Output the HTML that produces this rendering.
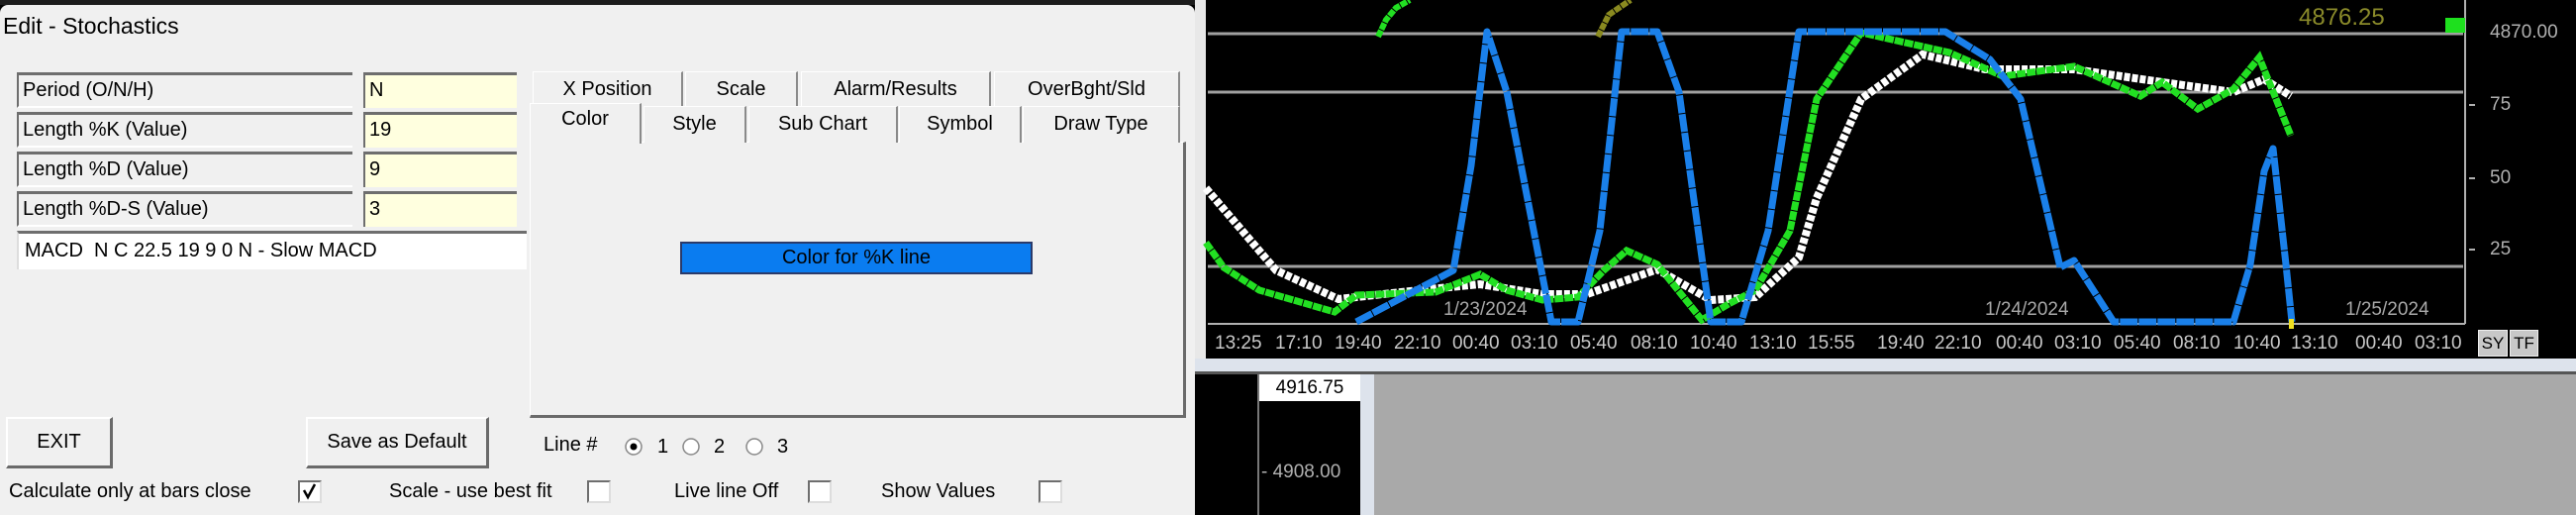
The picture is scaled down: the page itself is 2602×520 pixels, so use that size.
<!DOCTYPE html>
<html><head><meta charset="utf-8"><style>
*{margin:0;padding:0;box-sizing:border-box}
body{width:2602px;height:520px;overflow:hidden;background:#000;font-family:"Liberation Sans",sans-serif;position:relative}
.a{position:absolute;white-space:nowrap}
#dlg{position:absolute;left:0;top:5px;width:1207px;height:515px;background:#f0f0f0;border-radius:8px 8px 0 0}
.lbl{position:absolute;left:17px;width:339px;height:36px;background:#f0f0f0;border-top:3px solid #6e6e6e;border-left:2px solid #6e6e6e;border-bottom:2px solid #fff;font-size:20px;line-height:30px;padding-left:4px;color:#000}
.val{position:absolute;left:367px;width:155px;height:36px;background:#ffffdf;border-top:3px solid #6e6e6e;border-left:2px solid #6e6e6e;font-size:20px;line-height:30px;padding-left:4px}
.tab{position:absolute;height:35px;border:1px solid #fff;border-right:2px solid #8a8a8a;border-bottom:none;font-size:20px;text-align:center;line-height:34px;background:#f0f0f0}
.btn{position:absolute;background:#f0f0f0;border:2px solid #fff;border-right:3px solid #6a6a6a;border-bottom:3px solid #6a6a6a;font-size:20px;text-align:center}
.cb{position:absolute;width:24px;height:23px;background:#fff;border:2px solid #6e6e6e;border-right-color:#ddd;border-bottom-color:#ddd}
.bt{font-size:20px;color:#000}
.tl{position:absolute;top:336px;font-size:19px;color:#c8c8c8}
</style></head><body>
<div class="a" style="left:0;top:0;width:1207px;height:5px;background:#1c1c1c"></div>
<div id="dlg"></div>
<div class="a" style="left:3px;top:13px;font-size:23px;color:#000">Edit - Stochastics</div>

<div class="lbl" style="top:73px">Period (O/N/H)</div>
<div class="lbl" style="top:113px">Length %K (Value)</div>
<div class="lbl" style="top:153px">Length %D (Value)</div>
<div class="lbl" style="top:193px">Length %D-S (Value)</div>
<div class="val" style="top:73px">N</div>
<div class="val" style="top:113px">19</div>
<div class="val" style="top:153px">9</div>
<div class="val" style="top:193px">3</div>
<div class="a" style="left:17px;top:233px;width:515px;height:39px;background:#fff;border-top:3px solid #6e6e6e;border-left:2px solid #ddd;font-size:20px;line-height:34px;padding-left:6px">MACD&nbsp; N C 22.5 19 9 0 N - Slow MACD</div>

<div class="tab" style="left:538px;top:72px;width:152px">X Position</div>
<div class="tab" style="left:692px;top:72px;width:114px">Scale</div>
<div class="tab" style="left:809px;top:72px;width:192px">Alarm/Results</div>
<div class="tab" style="left:1004px;top:72px;width:188px">OverBght/Sld</div>
<div class="a" style="left:535px;top:143px;width:663px;height:279px;background:#f0f0f0;border-top:1px solid #fff;border-left:1px solid #fff;border-right:3px solid #6a6a6a;border-bottom:3px solid #6a6a6a"></div>
<div class="tab" style="left:650px;top:107px;width:104px;height:37px">Style</div>
<div class="tab" style="left:756px;top:107px;width:151px;height:37px">Sub Chart</div>
<div class="tab" style="left:908px;top:107px;width:124px;height:37px">Symbol</div>
<div class="tab" style="left:1033px;top:107px;width:159px;height:37px">Draw Type</div>
<div class="tab" style="left:535px;top:104px;width:113px;height:41px;line-height:30px">Color</div>
<div class="a" style="left:687px;top:244px;width:356px;height:33px;background:#0a7cf0;border:2px solid #2a3a6a;font-size:20px;text-align:center;line-height:29px;color:#000">Color for %K line</div>

<div class="btn" style="left:6px;top:421px;width:108px;height:52px;line-height:47px">EXIT</div>
<div class="btn" style="left:309px;top:421px;width:185px;height:52px;line-height:47px">Save as Default</div>
<div class="a bt" style="left:549px;top:438px">Line #</div>
<svg class="a" style="left:630px;top:438px" width="180" height="26">
<circle cx="10" cy="13" r="8" fill="#fff" stroke="#888" stroke-width="1.5"/><circle cx="10" cy="13" r="3.5" fill="#000"/>
<circle cx="68" cy="13" r="8" fill="#fff" stroke="#888" stroke-width="1.5"/>
<circle cx="132" cy="13" r="8" fill="#fff" stroke="#888" stroke-width="1.5"/>
</svg>
<div class="a bt" style="left:664px;top:440px">1</div>
<div class="a bt" style="left:721px;top:440px">2</div>
<div class="a bt" style="left:785px;top:440px">3</div>

<div class="a bt" style="left:9px;top:485px">Calculate only at bars close</div>
<div class="cb" style="left:301px;top:485px"><svg width="20" height="19"><path d="M4 8 L8 15 L15 2" stroke="#000" stroke-width="2.5" fill="none"/></svg></div>
<div class="a bt" style="left:393px;top:485px">Scale - use best fit</div>
<div class="cb" style="left:593px;top:485px"></div>
<div class="a bt" style="left:681px;top:485px">Live line Off</div>
<div class="cb" style="left:816px;top:485px"></div>
<div class="a bt" style="left:890px;top:485px">Show Values</div>
<div class="cb" style="left:1049px;top:485px"></div>

<!-- chart -->
<div class="a" style="left:1207px;top:0;width:11px;height:362px;background:#e8e8e8"></div>
<svg class="a" style="left:0;top:0" width="2602" height="520">
<g stroke="#a0a0a0" stroke-width="3"><line x1="1220" y1="34" x2="2488" y2="34"/><line x1="1220" y1="93" x2="2488" y2="93"/><line x1="1220" y1="269" x2="2488" y2="269"/></g>
<line x1="1220" y1="327" x2="2490" y2="327" stroke="#b0b0b0" stroke-width="2"/>
<line x1="2490" y1="0" x2="2490" y2="327" stroke="#b0b0b0" stroke-width="2"/>
<g stroke="#b0b0b0" stroke-width="2"><line x1="2494" y1="106" x2="2500" y2="106"/><line x1="2494" y1="180" x2="2500" y2="180"/><line x1="2494" y1="252" x2="2500" y2="252"/></g>
<rect x="2470" y="18" width="20" height="15" fill="#1ee01e"/>
<polyline points="1392,37 1400,20 1410,8 1424,0" fill="none" stroke="#22e022" stroke-width="6" stroke-dasharray="7 1"/>
<polyline points="1614,37 1625,15 1647,0" fill="none" stroke="#8a8a20" stroke-width="6" stroke-dasharray="7 1"/>
<polyline points="1218,190 1289,273 1352,302 1433,293 1495,287 1558,297 1603,297 1674,272 1728,303 1773,300 1817,260 1835,200 1880,100 1942,55 2005,70 2095,70 2184,83 2256,93 2287,80 2314,97" fill="none" stroke="#fff" stroke-width="8" stroke-dasharray="6 2"/>
<polyline points="1218,245 1236,270 1272,293 1348,315 1370,298 1450,295 1495,277 1522,293 1558,303 1594,300 1620,273 1643,253 1674,267 1719,323 1746,307 1773,293 1808,233 1835,100 1880,33 1969,53 2023,77 2095,67 2162,97 2184,83 2220,110 2256,90 2282,58 2314,137" fill="none" stroke="#22e022" stroke-width="7" stroke-dasharray="9 1"/>
<polyline points="1370,325 1468,273 1486,167 1502,32 1522,93 1567,325 1594,325 1616,233 1638,32 1674,32 1696,93 1728,325 1759,325 1786,233 1817,32 1965,32 2010,60 2041,100 2081,270 2095,263 2135,325 2256,325 2273,267 2287,173 2296,150 2309,267 2315,325" fill="none" stroke="#1a80ea" stroke-width="7" stroke-linejoin="round" stroke-dasharray="18 1"/>
<rect x="2312" y="322" width="5" height="10" fill="#f0e020"/>
</svg>
<div class="a" style="left:2322px;top:4px;font-size:24px;color:#8a8a2a">4876.25</div>
<div class="a" style="left:2515px;top:22px;font-size:19px;color:#b0b0b0">4870.00</div>
<div class="a" style="left:2515px;top:95px;font-size:19px;color:#b0b0b0">75</div>
<div class="a" style="left:2515px;top:169px;font-size:19px;color:#b0b0b0">50</div>
<div class="a" style="left:2515px;top:241px;font-size:19px;color:#b0b0b0">25</div>
<div class="a" style="left:1458px;top:302px;font-size:19px;color:#a8a8a8">1/23/2024</div>
<div class="a" style="left:2005px;top:302px;font-size:19px;color:#a8a8a8">1/24/2024</div>
<div class="a" style="left:2369px;top:302px;font-size:19px;color:#a8a8a8">1/25/2024</div>
<div class="tl" style="left:1227px">13:25</div><div class="tl" style="left:1288px">17:10</div><div class="tl" style="left:1348px">19:40</div><div class="tl" style="left:1408px">22:10</div><div class="tl" style="left:1467px">00:40</div><div class="tl" style="left:1526px">03:10</div><div class="tl" style="left:1586px">05:40</div><div class="tl" style="left:1647px">08:10</div><div class="tl" style="left:1707px">10:40</div><div class="tl" style="left:1767px">13:10</div><div class="tl" style="left:1826px">15:55</div><div class="tl" style="left:1896px">19:40</div><div class="tl" style="left:1954px">22:10</div><div class="tl" style="left:2016px">00:40</div><div class="tl" style="left:2075px">03:10</div><div class="tl" style="left:2135px">05:40</div><div class="tl" style="left:2195px">08:10</div><div class="tl" style="left:2256px">10:40</div><div class="tl" style="left:2314px">13:10</div><div class="tl" style="left:2379px">00:40</div><div class="tl" style="left:2439px">03:10</div>
<div class="a" style="left:2503px;top:333px;width:30px;height:27px;background:#c8c8c8;border:1px solid #eee;font-size:17px;line-height:25px;text-align:center">SY</div>
<div class="a" style="left:2535px;top:333px;width:29px;height:27px;background:#c8c8c8;border:1px solid #eee;font-size:17px;line-height:25px;text-align:center">TF</div>

<div class="a" style="left:1207px;top:362px;width:1395px;height:13px;background:#dde3ec"></div>
<div class="a" style="left:1207px;top:375px;width:1395px;height:3px;background:#555"></div>
<div class="a" style="left:1207px;top:378px;width:63px;height:142px;background:#000"></div>
<div class="a" style="left:1270px;top:378px;width:2px;height:142px;background:#777"></div>
<div class="a" style="left:1272px;top:378px;width:102px;height:142px;background:#000"></div>
<div class="a" style="left:1272px;top:378px;width:102px;height:27px;background:#fff;font-size:19px;line-height:27px;text-align:center;color:#000">4916.75</div>
<div class="a" style="left:1274px;top:466px;font-size:19px;color:#b0b0b0">- 4908.00</div>
<div class="a" style="left:1374px;top:378px;width:14px;height:142px;background:#dde3ec"></div>
<div class="a" style="left:1388px;top:378px;width:1214px;height:142px;background:#a9a9a9"></div>
</body></html>
